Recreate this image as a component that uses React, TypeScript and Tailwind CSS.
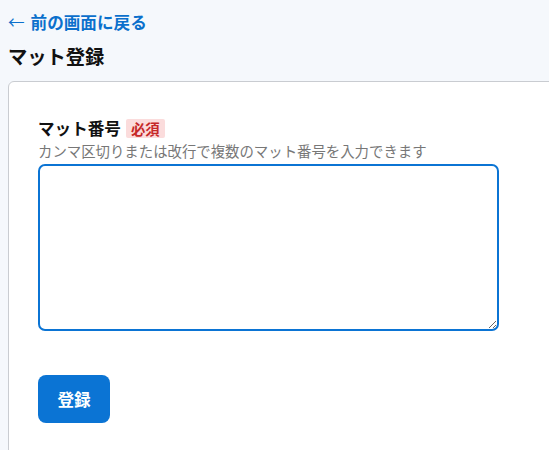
import React from 'react';

export default function App() {
  return (
    <div className="w-[549px] h-[450px] overflow-hidden bg-[#f5f8fc] pl-2 pt-[10px] font-['Noto_Sans_CJK_JP','Noto_Sans',sans-serif] text-[#1a1a1a]">
      <a href="#" className="flex items-center gap-[6px] text-[16.6px] leading-6 font-bold text-[#0b70cc] no-underline">
        <span className="font-normal">←</span>
        <span>前の画面に戻る</span>
      </a>
      <h1 className="mt-[8px] text-[19.3px] leading-7 font-bold text-[#111]">マット登録</h1>
      <div className="mt-[11px] w-[600px] h-[400px] bg-white border border-[#c9ccd1] rounded-[6px] pl-[29px] pt-[34px]">
        <div className="flex items-center gap-[5px] h-6">
          <span className="text-[16.6px] font-bold leading-6 text-[#111]">マット番号</span>
          <span className="bg-[#fbdcdc] text-[#c62828] text-[14.4px] font-bold leading-[19px] px-[5px] rounded-[2px]">必須</span>
        </div>
        <p className="text-[14.4px] leading-5 text-[#777] mt-[1px]">カンマ区切りまたは改行で複数のマット番号を入力できます</p>
        <textarea className="block mt-[3px] w-[461px] h-[167px] border-2 border-[#0b74d4] rounded-[7px] outline-none bg-white" />
        <button className="mt-[44px] w-[72px] h-[48px] bg-[#0b74d4] text-white text-[16.6px] font-bold rounded-[8px]">
          登録
        </button>
      </div>
    </div>
  );
}
